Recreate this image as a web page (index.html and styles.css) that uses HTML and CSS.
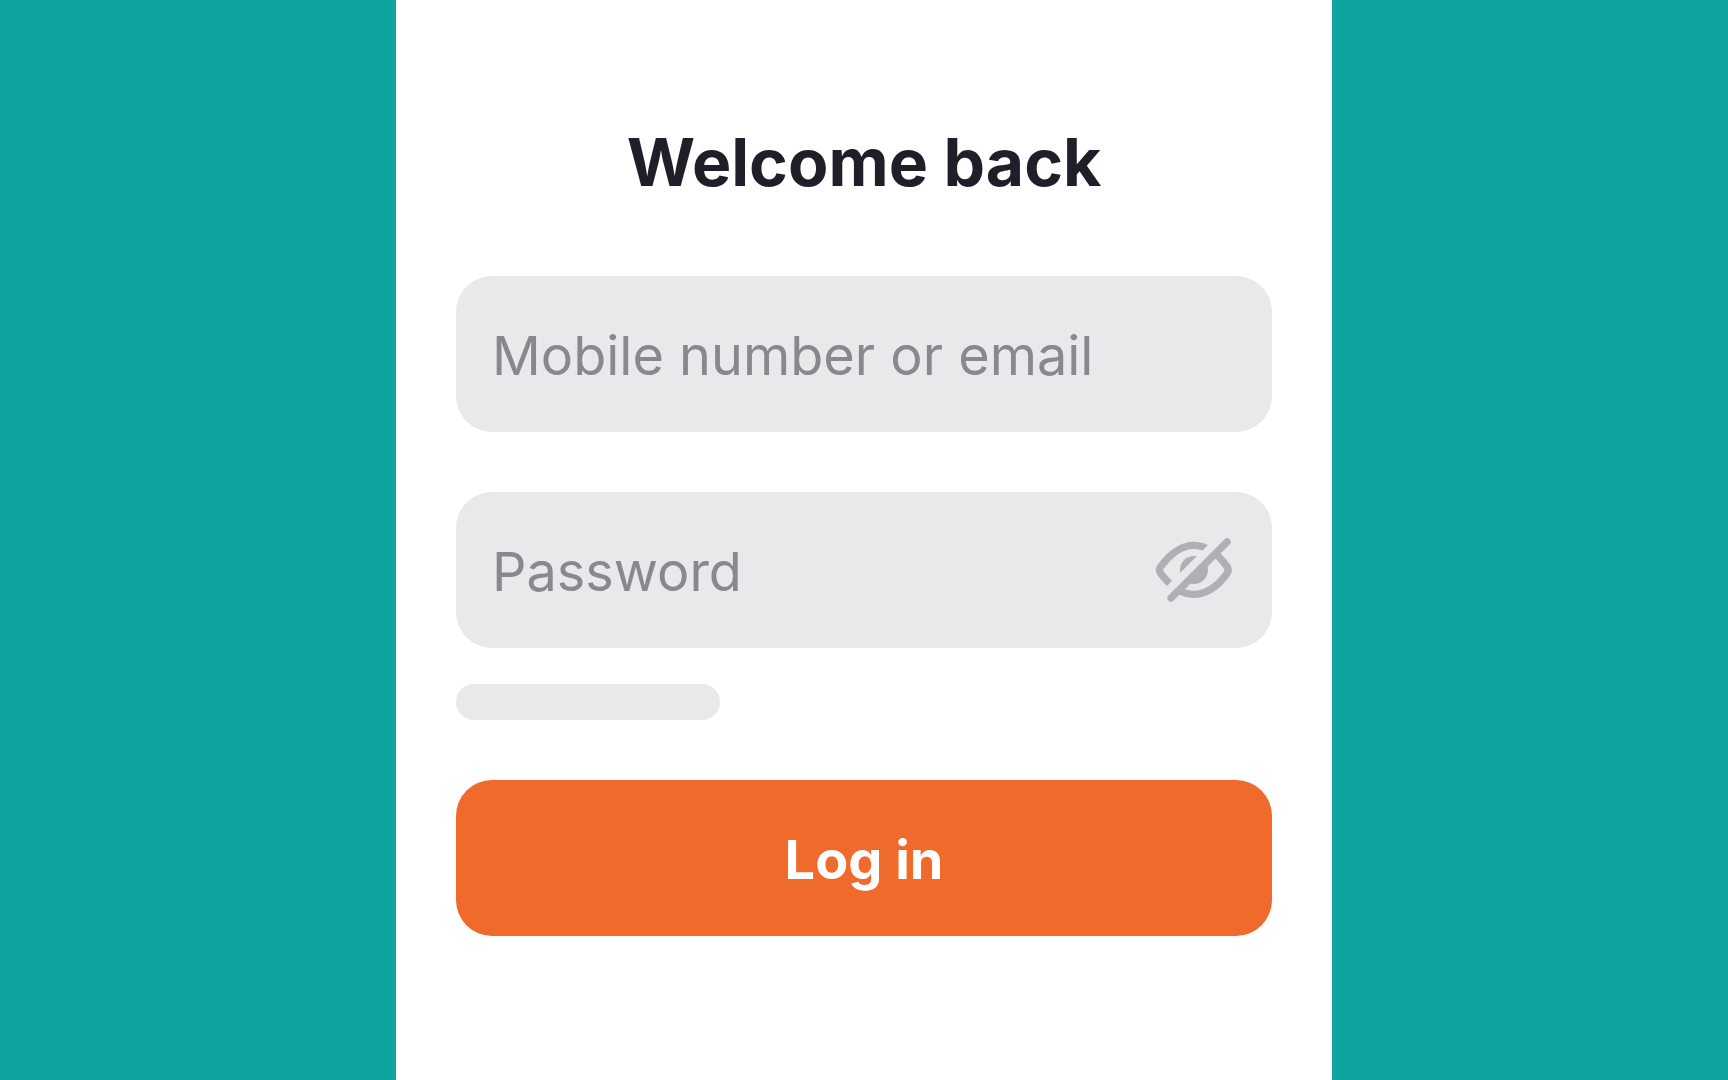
FILE: index.html
```
<!DOCTYPE html>
<html lang="en">

<head>
	<meta charset="UTF-8">
	<meta name="viewport" content="width=device-width, initial-scale=1.0">
	<title>Log in</title>
	<link rel="stylesheet" href="styles.css">
</head>

<body>
	<main class="panel">
		<h1 class="title">Welcome back</h1>
		<form class="login-form">
			<div class="field">
				<input class="field-input" type="text" name="login" placeholder="Mobile number or email" aria-label="Mobile number or email">
			</div>
			<div class="field">
				<input class="field-input" type="password" name="password" placeholder="Password" aria-label="Password">
				<button class="toggle-password" type="button" aria-label="Show password">
					<svg class="eye" viewBox="36 42 252 216" aria-hidden="true">
						<!-- everything except the gap above the slash -->
						<clipPath id="eye-gap">
							<path d="M0 0H279L0 279ZM327 0H400V400H0V327Z" />
						</clipPath>
						<g clip-path="url(#eye-gap)">
							<path class="eye-line" d="M62 140C92 100 126 76 161 76C196 76 234 100 261 140Q268 150 261 160C234 200 196 223 161 223C126 223 92 200 62 160Q55 150 62 140Z" />
							<circle class="eye-iris" cx="162" cy="150" r="42" />
						</g>
						<path class="eye-line slash" d="M93 234L261 66" />
					</svg>
				</button>
			</div>
			<div class="forgot"></div>
			<button class="submit" type="submit">Log in</button>
		</form>
	</main>
</body>

</html>
```

FILE: styles.css
```
* {
	box-sizing: border-box;
}

body {
	margin: 0;
	background-color: #0ea5a0;
	font-family: Inter, "Liberation Sans", sans-serif;
}

.panel {
	width: 100%;
	max-width: 936px;
	min-height: 100vh;
	margin: 0 auto;
	padding: 120px 60px;
	background-color: white;
}

.title {
	margin: 0 0 72px;
	font-size: 66px;
	line-height: 84px;
	font-weight: 700;
	text-align: center;
	color: #1f1f29;
}

.login-form {
	display: flex;
	flex-direction: column;
}

.field {
	display: flex;
	align-items: center;
	height: 156px;
	padding: 0 36px;
	border-radius: 36px;
	background-color: #e9e9eb;
}

.field + .field {
	margin-top: 60px;
}

.field-input {
	flex: 1;
	min-width: 0;
	height: 100%;
	padding: 2px 0 0;
	border: none;
	outline: none;
	background: none;
	font-family: inherit;
	font-size: 54px;
	color: #1f1f29;
}

.field-input::placeholder {
	color: #88898d;
	opacity: 1;
}

.toggle-password {
	display: flex;
	padding: 0;
	border: none;
	background: none;
	cursor: pointer;
}

.eye {
	width: 84px;
	height: 72px;
}

.eye-line {
	fill: none;
	stroke: #afb0b3;
	stroke-width: 22;
}

.slash {
	stroke-linecap: round;
}

.eye-iris {
	fill: #afb0b3;
}

.forgot {
	width: 264px;
	height: 36px;
	margin: 36px 0 60px;
	border-radius: 18px;
	background-color: #e9e9eb;
}

.submit {
	height: 156px;
	padding: 2px 0 0;
	border: none;
	border-radius: 36px;
	background-color: #f06a2b;
	font-family: inherit;
	font-size: 54px;
	font-weight: 700;
	color: white;
	cursor: pointer;
}
```
